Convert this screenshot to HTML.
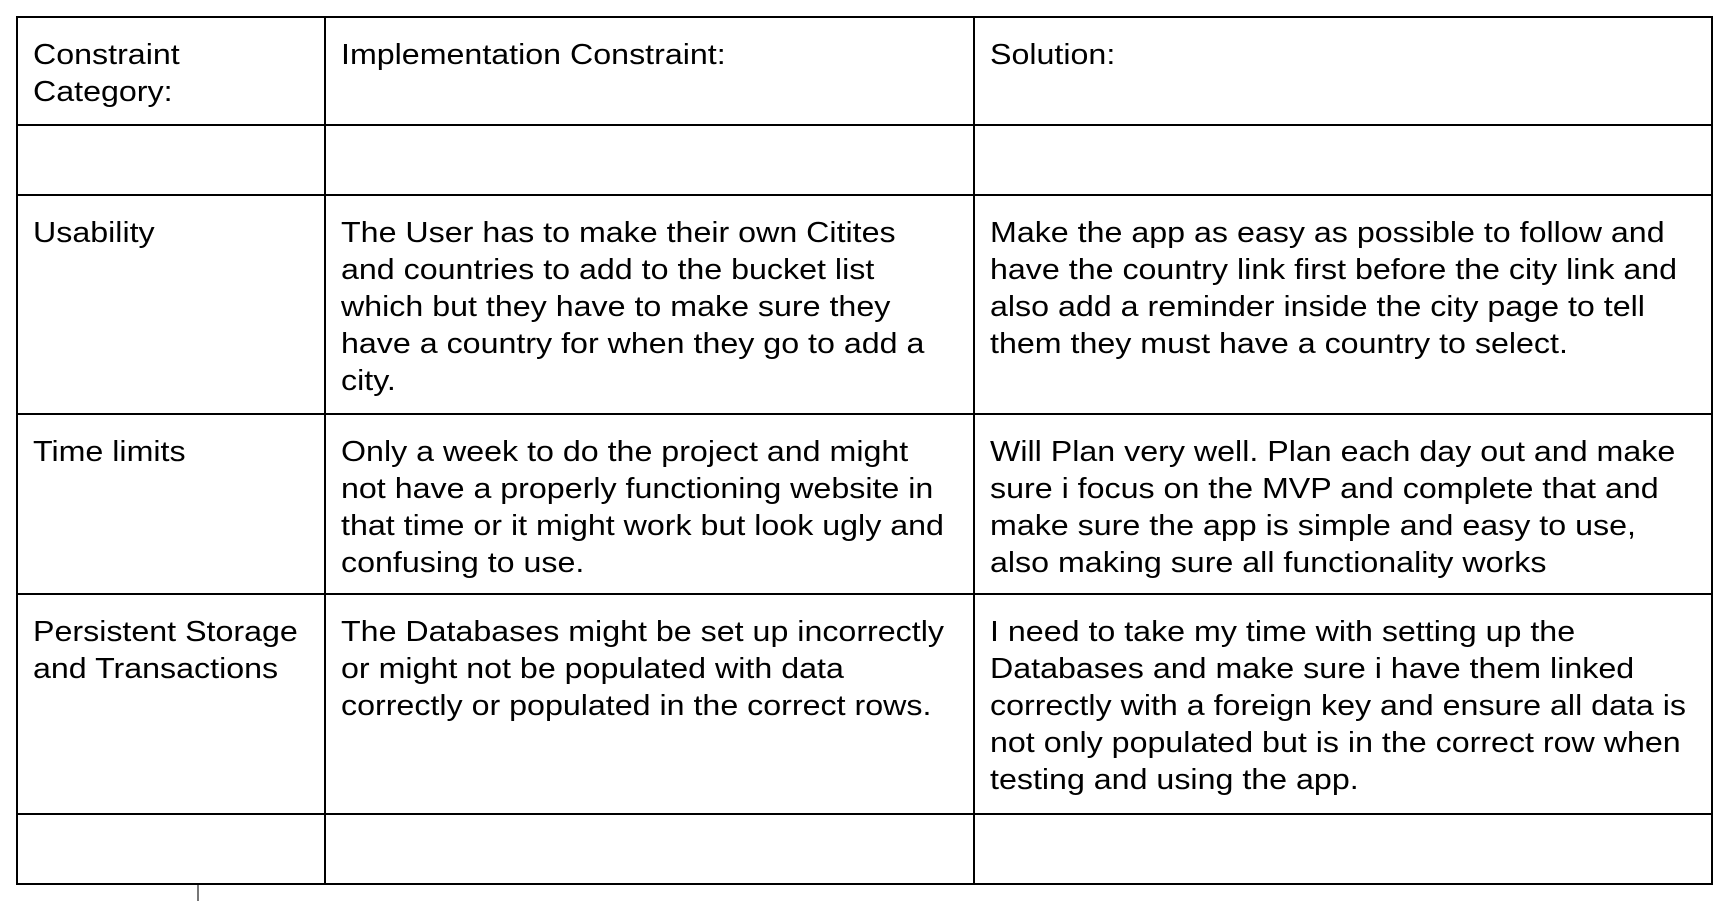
<!DOCTYPE html>
<html><head><meta charset="utf-8"><style>
html,body{margin:0;padding:0;background:#fff;width:1732px;height:902px;overflow:hidden}
body{position:relative;font-family:"Liberation Sans",Arial,sans-serif;font-size:29px;line-height:37px;color:#000}
.h{position:absolute;height:2px;background:#000}
.v{position:absolute;width:2px;background:#000}
.t{position:absolute;white-space:nowrap;transform:scaleX(1.11);transform-origin:0 0}
</style></head><body>
<div class="h" style="left:16px;top:16px;width:1697px"></div>
<div class="h" style="left:16px;top:124px;width:1697px"></div>
<div class="h" style="left:16px;top:194px;width:1697px"></div>
<div class="h" style="left:16px;top:413px;width:1697px"></div>
<div class="h" style="left:16px;top:593px;width:1697px"></div>
<div class="h" style="left:16px;top:813px;width:1697px"></div>
<div class="h" style="left:16px;top:883px;width:1697px"></div>
<div class="v" style="left:16px;top:16px;height:869px"></div>
<div class="v" style="left:324px;top:16px;height:869px"></div>
<div class="v" style="left:973px;top:16px;height:869px"></div>
<div class="v" style="left:1711px;top:16px;height:869px"></div>
<div style="position:absolute;left:197px;top:885px;width:2px;height:16px;background:#777"></div>

<div class="t" style="left:33px;top:37px">Constraint<br>Category:</div>
<div class="t" style="left:341px;top:37px">Implementation Constraint:</div>
<div class="t" style="left:990px;top:37px">Solution:</div>

<div class="t" style="left:33px;top:215px">Usability</div>
<div class="t" style="left:341px;top:215px">The User has to make their own Citites<br>and countries to add to the bucket list<br>which but they have to make sure they<br>have a country for when they go to add a<br>city.</div>
<div class="t" style="left:990px;top:215px">Make the app as easy as possible to follow and<br>have the country link first before the city link and<br>also add a reminder inside the city page to tell<br>them they must have a country to select.</div>

<div class="t" style="left:33px;top:434px">Time limits</div>
<div class="t" style="left:341px;top:434px">Only a week to do the project and might<br>not have a properly functioning website in<br>that time or it might work but look ugly and<br>confusing to use.</div>
<div class="t" style="left:990px;top:434px">Will Plan very well. Plan each day out and make<br>sure i focus on the MVP and complete that and<br>make sure the app is simple and easy to use,<br>also making sure all functionality works</div>

<div class="t" style="left:33px;top:614px">Persistent Storage<br>and Transactions</div>
<div class="t" style="left:341px;top:614px">The Databases might be set up incorrectly<br>or might not be populated with data<br>correctly or populated in the correct rows.</div>
<div class="t" style="left:990px;top:614px">I need to take my time with setting up the<br>Databases and make sure i have them linked<br>correctly with a foreign key and ensure all data is<br>not only populated but is in the correct row when<br>testing and using the app.</div>
</body></html>
